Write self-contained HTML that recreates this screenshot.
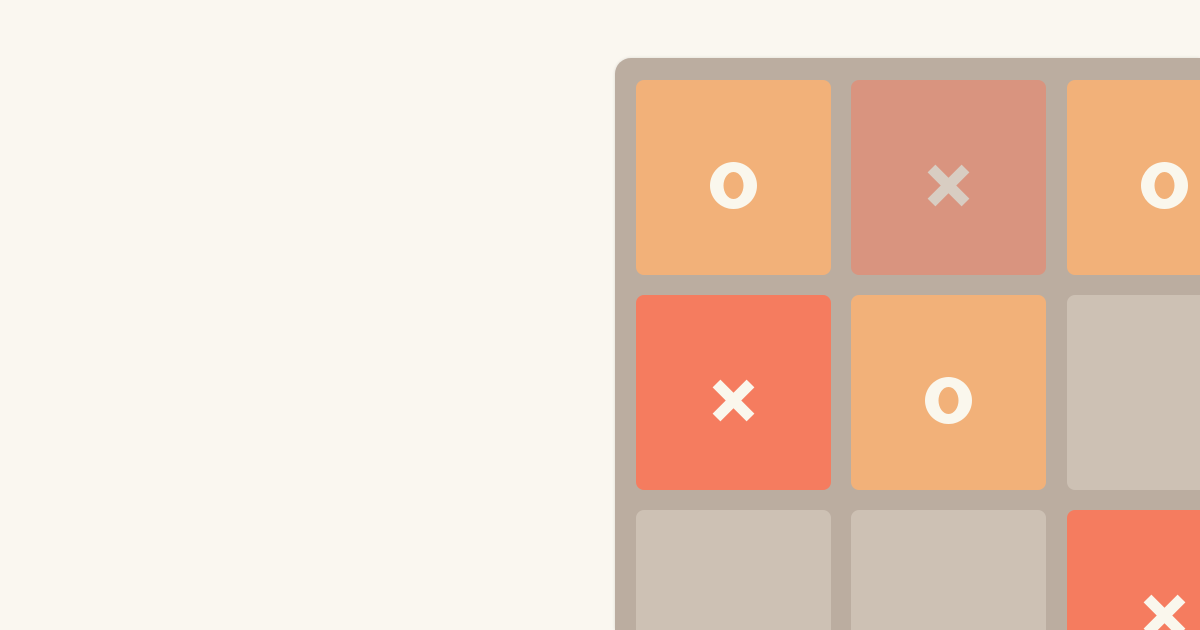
<!DOCTYPE html>
<html><head><meta charset="utf-8"><style>
html,body{margin:0;padding:0;width:1200px;height:630px;overflow:hidden;background:#FAF7F0;}
.wrap{position:relative;width:1200px;height:630px;overflow:hidden;background:#FAF7F0;}
.board{position:absolute;left:615px;top:58px;width:585px;height:572px;background:#BBADA0;border-radius:16px 0 0 0;box-shadow:0 0 3px rgba(0,0,0,0.12);overflow:hidden;}
.t{position:absolute;width:195px;height:195px;border-radius:8px;overflow:hidden;}
.o{background:#F2B179}.p{background:#D9947F}.r{background:#F57C5F}.e{background:#CDC1B4}
svg{position:absolute;left:0;top:8px;width:195px;height:187px}
</style></head><body><div class="wrap">
<div class="board">
<div class="t o" style="left:21px;top:22px"><svg viewBox="0 0 195 187"><path fill-rule="evenodd" fill="#FAF7ED" d="M74 97.5a23.5 23.5 0 1 0 47 0a23.5 23.5 0 1 0 -47 0ZM87.5 97.5a10 13.5 0 1 0 20 0a10 13.5 0 1 0 -20 0Z"/></svg></div>
<div class="t p" style="left:236px;top:22px"><svg viewBox="0 0 195 187"><path stroke="#D8CDC2" stroke-width="11" d="M80.5 80.5L114.5 114.5M114.5 80.5L80.5 114.5"/></svg></div>
<div class="t o" style="left:452px;top:22px"><svg viewBox="0 0 195 187"><path fill-rule="evenodd" fill="#FAF7ED" d="M74 97.5a23.5 23.5 0 1 0 47 0a23.5 23.5 0 1 0 -47 0ZM87.5 97.5a10 13.5 0 1 0 20 0a10 13.5 0 1 0 -20 0Z"/></svg></div>
<div class="t r" style="left:21px;top:237px"><svg viewBox="0 0 195 187"><path stroke="#FAF7ED" stroke-width="11" d="M80.5 80.5L114.5 114.5M114.5 80.5L80.5 114.5"/></svg></div>
<div class="t o" style="left:236px;top:237px"><svg viewBox="0 0 195 187"><path fill-rule="evenodd" fill="#FAF7ED" d="M74 97.5a23.5 23.5 0 1 0 47 0a23.5 23.5 0 1 0 -47 0ZM87.5 97.5a10 13.5 0 1 0 20 0a10 13.5 0 1 0 -20 0Z"/></svg></div>
<div class="t e" style="left:452px;top:237px"></div>
<div class="t e" style="left:21px;top:452px"></div>
<div class="t e" style="left:236px;top:452px"></div>
<div class="t r" style="left:452px;top:452px"><svg viewBox="0 0 195 187"><path stroke="#FAF7ED" stroke-width="11" d="M80.5 80.5L114.5 114.5M114.5 80.5L80.5 114.5"/></svg></div>
</div>
</div></body></html>
